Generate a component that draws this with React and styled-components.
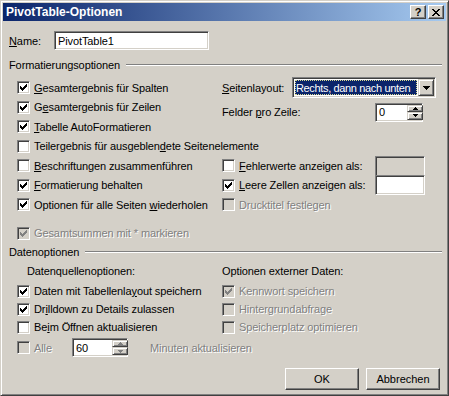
import React from 'react';
import styled, { createGlobalStyle } from 'styled-components';

const GlobalStyle = createGlobalStyle`
  html, body {
    margin: 0;
    padding: 0;
    background: #d4d0c8;
  }
  body {
    font-family: "Liberation Sans", Arial, sans-serif;
    font-size: 11px;
    letter-spacing: -0.1px;
    color: #000;
  }
`;

const Window = styled.div`
  width: 449px;
  height: 396px;
  box-sizing: border-box;
  background: #d4d0c8;
  border: 1px solid;
  border-color: #d4d0c8 #404040 #404040 #d4d0c8;
  box-shadow: inset 1px 1px #fff, inset -1px -1px #808080;
  padding: 2px;
  display: flex;
  flex-direction: column;
`;

const TitleBar = styled.div`
  height: 18px;
  flex: none;
  display: flex;
  align-items: center;
  padding: 0 2px 0 3px;
  background: linear-gradient(to right, #0a246a, #a6caf0);
  color: #fff;
  font-weight: bold;
  font-size: 12px;
  letter-spacing: 0;
`;

const TitleText = styled.div`
  flex: 1;
`;

const TitleButton = styled.div`
  width: 16px;
  height: 14px;
  box-sizing: border-box;
  margin-left: 2px;
  background: #d4d0c8;
  border: 1px solid;
  border-color: #fff #404040 #404040 #fff;
  box-shadow: inset -1px -1px #808080;
  display: flex;
  align-items: center;
  justify-content: center;
  color: #000;
  font-size: 11px;
  font-weight: bold;
  line-height: 1;
`;

const Body = styled.div`
  flex: 1;
  padding: 0 4px 0 6px;
  display: flex;
  flex-direction: column;
`;

const NameRow = styled.div`
  display: flex;
  align-items: center;
  margin-top: 10px;
  height: 19px;
`;

const NameLabel = styled.div`
  width: 45px;
`;

const Field = styled.div`
  box-sizing: border-box;
  width: ${p => p.$w}px;
  height: ${p => p.$h || 19}px;
  flex: none;
  border: 1px solid;
  border-color: #808080 #fff #fff #808080;
  box-shadow: inset 1px 1px #404040, inset -1px -1px #d4d0c8;
  background: ${p => (p.$disabled ? '#d4d0c8' : '#fff')};
  color: #000;
  display: flex;
  align-items: center;
  padding: 0 ${p => (p.$spin ? 0 : 2)}px 0 3px;
`;

const FieldText = styled.div`
  flex: 1;
`;

const GroupHead = styled.div`
  display: flex;
  align-items: center;
  gap: 6px;
  height: 14px;
  margin-top: ${p => p.$top}px;

  &::after {
    content: '';
    flex: 1;
    height: 0;
    border-top: 1px solid #808080;
    border-bottom: 1px solid #fff;
  }
`;

const FormatGrid = styled.div`
  display: grid;
  grid-template-columns: 205px 1fr;
  grid-template-rows: repeat(7, 19.5px);
  margin: 6px 0 0 8px;
`;

const DataGrid = styled.div`
  display: grid;
  grid-template-columns: 205px 1fr;
  grid-template-rows: 22px 18px 18px 18px 23px;
  margin: 1px 0 0 8px;
`;

const Cell = styled.div`
  display: flex;
  align-items: center;
  white-space: nowrap;
  grid-column: ${p => (p.$wide ? '1 / -1' : 'auto')};
  padding-left: ${p => p.$indent || 0}px;
`;

const SpinCell = styled(Cell)`
  grid-row: span 2;
  align-self: start;
  margin-top: 5px;
`;

const Lead = styled.div`
  width: ${p => p.$w}px;
  flex: none;
  display: flex;
  align-items: center;
`;

const SingleRow = styled(Cell)`
  height: 19.5px;
  margin: 9px 0 0 8px;
`;

const Check = styled.label`
  display: flex;
  align-items: center;
  gap: 4px;
  color: ${p => (p.$disabled ? '#808080' : '#000')};
  text-shadow: ${p => (p.$disabled ? '1px 1px 0 #fff' : 'none')};
`;

const Box = styled.span`
  width: 13px;
  height: 13px;
  box-sizing: border-box;
  flex: none;
  border: 1px solid;
  border-color: #808080 #fff #fff #808080;
  box-shadow: inset 1px 1px #404040, inset -1px -1px #d4d0c8;
  background: ${p => (p.$disabled ? '#d4d0c8' : '#fff')};
  display: flex;
  align-items: center;
  justify-content: center;
`;

const Acc = styled.span`
  text-decoration: underline;
`;

const Select = styled.div`
  box-sizing: border-box;
  width: 144px;
  height: 21px;
  border: 1px solid;
  border-color: #808080 #fff #fff #808080;
  box-shadow: inset 1px 1px #404040, inset -1px -1px #d4d0c8;
  background: #fff;
  padding: 2px;
  display: flex;
  gap: 1px;
`;

const Selected = styled.div`
  flex: 1;
  background: #0a246a;
  color: #fff;
  outline: 1px dotted #d8d890;
  outline-offset: -1px;
  display: flex;
  align-items: center;
  padding-left: 1px;
  letter-spacing: -0.35px;
  white-space: nowrap;
  overflow: hidden;
`;

const Raised = styled.div`
  box-sizing: border-box;
  background: #d4d0c8;
  border: 1px solid;
  border-color: #d4d0c8 #404040 #404040 #d4d0c8;
  box-shadow: inset 1px 1px #fff, inset -1px -1px #808080;
  display: flex;
  align-items: center;
  justify-content: center;
`;

const DropButton = styled(Raised)`
  width: 16px;
  height: 17px;
  margin: -1px -1px 0 0;
`;

const SpinButtons = styled.div`
  display: flex;
  flex-direction: column;
  margin-right: -1px;
`;

const SpinButton = styled(Raised)`
  width: 16px;
  height: ${p => p.$h}px;
`;

const Footer = styled.div`
  display: flex;
  justify-content: flex-end;
  gap: 7px;
  margin-top: 9px;
  padding-right: 2px;
`;

const Button = styled.button`
  width: 74px;
  height: 22px;
  box-sizing: border-box;
  background: #d4d0c8;
  border: 1px solid;
  border-color: #fff #404040 #404040 #fff;
  box-shadow: inset -1px -1px #808080;
  font-family: "Liberation Sans", Arial, sans-serif;
  font-size: 11px;
  color: #000;
  padding: 0;
`;

const Pixels = ({ w, h, d, color }) => (
  <svg width={w} height={h} viewBox={`0 0 ${w} ${h}`} shapeRendering="crispEdges">
    <path fill={color} d={d} />
  </svg>
);

const CHECK = 'M0 2h1v3H0zM1 3h1v3H1zM2 4h1v3H2zM3 3h1v3H3zM4 2h1v3H4zM5 1h1v3H5zM6 0h1v3H6z';
const CLOSE = 'M0 0h2v1H0zM6 0h2v1H6zM1 1h2v1H1zM5 1h2v1H5zM2 2h4v1H2zM3 3h2v1H3zM2 4h4v1H2zM1 5h2v1H1zM5 5h2v1H5zM0 6h2v1H0zM6 6h2v1H6z';
const DOWN = 'M0 0h7v1H0zM1 1h5v1H1zM2 2h3v1H2zM3 3h1v1H3z';
const SPIN_UP = 'M2 0h1v1H2zM1 1h3v1H1zM0 2h5v1H0z';
const SPIN_DOWN = 'M0 0h5v1H0zM1 1h3v1H1zM2 2h1v1H2z';

function CheckBox({ checked, disabled, children }) {
  return (
    <Check $disabled={disabled}>
      <Box $disabled={disabled}>
        {checked && <Pixels w={7} h={7} d={CHECK} color={disabled ? '#808080' : '#000'} />}
      </Box>
      <span>{children}</span>
    </Check>
  );
}

function Spinner({ width, value, disabled }) {
  const arrow = disabled ? '#808080' : '#000';
  return (
    <Field $w={width} $spin>
      <FieldText>{value}</FieldText>
      <SpinButtons>
        <SpinButton $h={7}><Pixels w={5} h={3} d={SPIN_UP} color={arrow} /></SpinButton>
        <SpinButton $h={8}><Pixels w={5} h={3} d={SPIN_DOWN} color={arrow} /></SpinButton>
      </SpinButtons>
    </Field>
  );
}

export default function App() {
  return (
    <>
      <GlobalStyle />
      <Window>
        <TitleBar>
          <TitleText>PivotTable-Optionen</TitleText>
          <TitleButton>?</TitleButton>
          <TitleButton><Pixels w={8} h={7} d={CLOSE} color="#000" /></TitleButton>
        </TitleBar>

        <Body>
          <NameRow>
            <NameLabel><Acc>N</Acc>ame:</NameLabel>
            <Field $w={155}>PivotTable1</Field>
          </NameRow>

          <GroupHead $top={8}>Formatierungsoptionen</GroupHead>
          <FormatGrid>
            <Cell><CheckBox checked><Acc>G</Acc>esamtergebnis für Spalten</CheckBox></Cell>
            <Cell>
              <Lead $w={70}><span><Acc>S</Acc>eitenlayout:</span></Lead>
              <Select>
                <Selected>Rechts, dann nach unten</Selected>
                <DropButton><Pixels w={7} h={4} d={DOWN} color="#000" /></DropButton>
              </Select>
            </Cell>

            <Cell><CheckBox checked>G<Acc>e</Acc>samtergebnis für Zeilen</CheckBox></Cell>
            <SpinCell>
              <Lead $w={153}><span>Felder <Acc>p</Acc>ro Zeile:</span></Lead>
              <Spinner width={48} value="0" />
            </SpinCell>

            <Cell><CheckBox checked><Acc>T</Acc>abelle AutoFormatieren</CheckBox></Cell>

            <Cell $wide><CheckBox>Teilergebnis für ausgeblen<Acc>d</Acc>ete Seitenelemente</CheckBox></Cell>

            <Cell><CheckBox><Acc>B</Acc>eschriftungen zusammenführen</CheckBox></Cell>
            <Cell>
              <Lead $w={153}><CheckBox><Acc>F</Acc>ehlerwerte anzeigen als:</CheckBox></Lead>
              <Field $w={50} $h={20} $disabled />
            </Cell>

            <Cell><CheckBox checked><Acc>F</Acc>ormatierung behalten</CheckBox></Cell>
            <Cell>
              <Lead $w={153}><CheckBox checked><Acc>L</Acc>eere Zellen anzeigen als:</CheckBox></Lead>
              <Field $w={50} $h={20} />
            </Cell>

            <Cell><CheckBox checked>Optionen für alle Seiten <Acc>w</Acc>iederholen</CheckBox></Cell>
            <Cell><CheckBox disabled>Drucktitel festlegen</CheckBox></Cell>
          </FormatGrid>

          <SingleRow>
            <CheckBox checked disabled>Gesamtsummen mit * markieren</CheckBox>
          </SingleRow>

          <GroupHead $top={2}>Datenoptionen</GroupHead>
          <DataGrid>
            <Cell $indent={10}>Datenquellenoptionen:</Cell>
            <Cell>Optionen externer Daten:</Cell>

            <Cell><CheckBox checked>Daten mit Tabellenla<Acc>y</Acc>out speichern</CheckBox></Cell>
            <Cell><CheckBox checked disabled>Kennwort speichern</CheckBox></Cell>

            <Cell><CheckBox checked>Dr<Acc>i</Acc>lldown zu Details zulassen</CheckBox></Cell>
            <Cell><CheckBox disabled>Hintergrundabfrage</CheckBox></Cell>

            <Cell><CheckBox>Be<Acc>i</Acc>m Öffnen aktualisieren</CheckBox></Cell>
            <Cell><CheckBox disabled>Speicherplatz optimieren</CheckBox></Cell>

            <Cell $wide>
              <Lead $w={55}><CheckBox disabled>Alle</CheckBox></Lead>
              <Spinner width={56} value="60" disabled />
              <Lead $w={22} />
              <Check $disabled>Minuten aktualisieren</Check>
            </Cell>
          </DataGrid>

          <Footer>
            <Button>OK</Button>
            <Button>Abbrechen</Button>
          </Footer>
        </Body>
      </Window>
    </>
  );
}
